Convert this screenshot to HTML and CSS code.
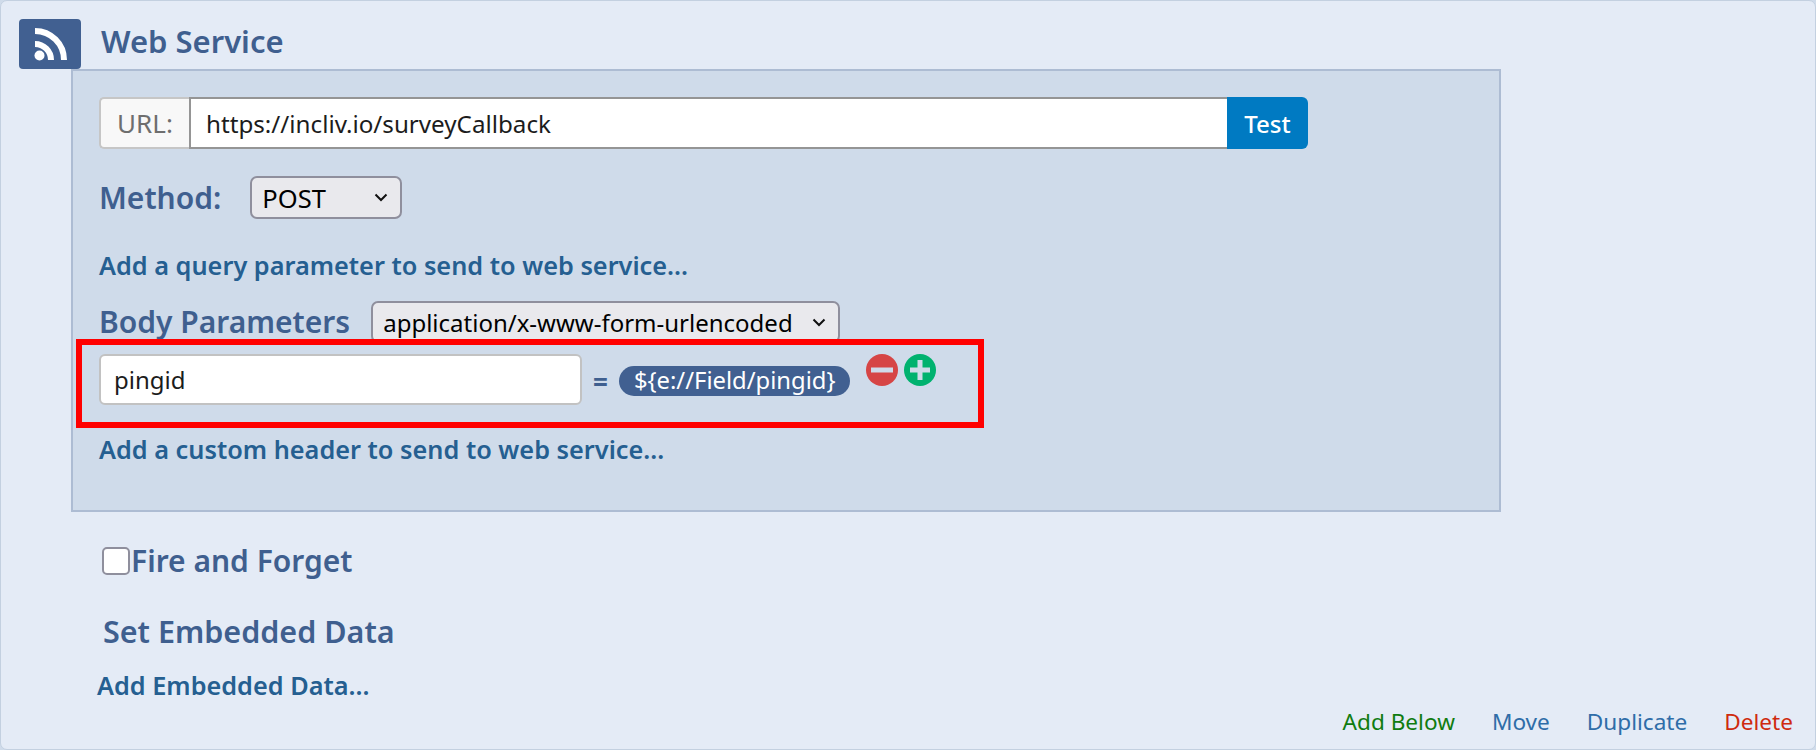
FILE: index.html
```html
<!DOCTYPE html>
<html lang="en">
<head>
<meta charset="utf-8">
<title>Web Service</title>
<link rel="stylesheet" href="styles.css">
</head>
<body>
<main class="card">
  <header class="head">
    <div class="badge">
      <svg width="36" height="36" viewBox="0 0 36 36" aria-hidden="true"><circle cx="7.500" cy="29.500" r="5" fill="#fff"/><path d="M3 18A16 16 0 0 1 19 34" fill="none" stroke="#fff" stroke-width="6"/><path d="M3 5A29 29 0 0 1 32 34" fill="none" stroke="#fff" stroke-width="6"/></svg>
    </div>
    <h1 class="title">Web Service</h1>
  </header>
  <section class="panel">
    <div class="url">
      <span class="url-label">URL:</span>
      <span class="url-value">https://incliv.io/surveyCallback</span>
      <button class="test">Test</button>
    </div>
    <div class="method">
      <span class="h-label">Method:</span>
      <div class="select select-post">POST<svg class="chev" width="14" height="9" viewBox="0 0 14 9"><path d="M1.500 1.500 7 7l5.500-5.500" fill="none" stroke="#111" stroke-width="2"/></svg></div>
    </div>
    <a class="link query">Add a query parameter to send to web service...</a>
    <div class="body-params">
      <span class="h-label">Body Parameters</span>
      <div class="select select-enc">application/x-www-form-urlencoded<svg class="chev" width="14" height="9" viewBox="0 0 14 9"><path d="M1.500 1.500 7 7l5.500-5.500" fill="none" stroke="#111" stroke-width="2"/></svg></div>
    </div>
    <div class="param">
      <div class="param-name">pingid</div>
      <span class="eq">=</span>
      <span class="pill">${e://Field/pingid}</span>
      <span class="round minus"><svg width="32" height="32" viewBox="0 0 32 32"><rect x="5" y="13.500" width="22" height="5" fill="#cfdbea"/></svg></span>
      <span class="round plus"><svg width="32" height="32" viewBox="0 0 32 32"><path d="M6 13.500h7.500V6h5v7.500H26v5h-7.500V26h-5v-7.500H6z" fill="#cfdbea"/></svg></span>
      <div class="annotation"></div>
    </div>
    <a class="link header-link">Add a custom header to send to web service...</a>
  </section>
  <label class="fire"><span class="check"></span>Fire and Forget</label>
  <h2 class="embedded">Set Embedded Data</h2>
  <a class="link add-embedded">Add Embedded Data...</a>
  <footer class="actions">
    <a class="act green">Add Below</a>
    <a class="act blue">Move</a>
    <a class="act blue">Duplicate</a>
    <a class="act red">Delete</a>
  </footer>
</main>
</body>
</html>
```
FILE: styles.css
```css
* { box-sizing: border-box; }
html, body { margin: 0; height: 750px; overflow: hidden; background: #cfdbea; }
body { font-family: "Noto Sans", "Open Sans", sans-serif; color: #1c1c1c; }
.card {
  position: relative;
  height: 750px;
  width: 1816px;
  padding: 18px 0 0 18px;
  background: #e4ebf6;
  border: 1px solid #c3d0e0;
  border-radius: 7px;
}
.head { display: flex; align-items: center; height: 50px; }
.badge {
  width: 62px; height: 50px;
  background: #416091;
  border-radius: 4px;
  display: flex; align-items: center; justify-content: center;
}
.title { margin: -6px 0 0 20px; font-size: 31px; font-weight: 600; color: #3f5f8f; line-height: 36px; }
.panel {
  width: 1430px;
  height: 443px;
  margin-left: 52px;
  padding: 26px 26px 0;
  background: #cfdbea;
  border: 2px solid #adbcd3;
}
.url { display: flex; width: 1209px; height: 52px; }
.url-label {
  width: 90px; display: flex; align-items: center; justify-content: center;
  background: #f8f8f8; border: 2px solid #c6c6c6; border-right: 0;
  border-radius: 5px 0 0 5px;
  font-size: 26px; color: #6e6e6e;
}
.url-value {
  flex: 1; display: flex; align-items: center; padding: 1px 0 0 15px;
  background: #fff; border: 2px solid #959595; border-right: 0;
  font-size: 24.200px; color: #1c1c1c;
}
.test {
  width: 81px; background: #007ac2; color: #fff; border: 0;
  border-radius: 0 6px 6px 0;
  font: 500 24px "Noto Sans", sans-serif;
  padding: 0;
}
.method { display: flex; align-items: center; margin-top: 27px; height: 43px; }
.h-label { font-size: 30px; font-weight: 600; color: #3f5f8f; line-height: 36px; }
.select {
  display: flex; align-items: center; justify-content: space-between;
  background: #e9e9ed; border: 2px solid #8f8f9d; border-radius: 7px;
  color: #000; padding: 0 12px 0 10px;
}
.select-post { width: 152px; height: 43px; margin-left: 29px; font-size: 25.500px; }
.select-enc { width: 469px; height: 42px; margin-left: 21px; font-size: 24px; }
.link { display: block; font-size: 25.300px; font-weight: 600; color: #255f91; line-height: 32px; }
.query { margin-top: 30px; }
.body-params { display: flex; align-items: center; margin-top: 20px; height: 42px; }
.param { position: relative; display: flex; align-items: flex-start; margin-top: 11px; height: 62px; }
.param-name {
  width: 483px; height: 51px; display: flex; align-items: center; padding-left: 13px;
  background: #fff; border: 2px solid #c2c2c2; border-radius: 6px;
  font-size: 24px;
}
.eq { margin: 10px 0 0 11px; font-size: 26px; font-weight: 700; color: #3f5f8f; }
.pill {
  margin: 12px 0 0 11px; height: 30px; line-height: 28px; padding: 0 14px 0 15px;
  background: #416091; color: #fff; border-radius: 15px; font-size: 23.800px;
}
.round { width: 32px; height: 32px; border-radius: 50%; display: block; flex: none; }
.round svg { display: block; }
.minus { margin: 0 0 0 16px; background: #d64545; }
.plus { margin: 0 0 0 6px; background: #00b26f; }
.annotation {
  position: absolute; left: -23px; top: -15px; width: 908px; height: 89px;
  border: 6px solid #ff0000;
}
.header-link { margin-top: 17px; }
.fire { display: flex; align-items: center; margin: 29px 0 0 83px; font-size: 30px; font-weight: 600; color: #3f5f8f; line-height: 40px; }
.check { width: 28px; height: 28px; background: #fff; border: 2px solid #8f8f9d; border-radius: 5px; margin-right: 1px; }
.embedded { margin: 32px 0 0 84px; font-size: 30.500px; font-weight: 600; color: #3f5f8f; line-height: 36px; }
.add-embedded { margin: 20px 0 0 78px; }
.actions { position: absolute; right: 22px; bottom: 12px; display: flex; gap: 37px; font-size: 22.600px; }
.green { color: #107c10; }
.blue { color: #2f6da8; }
.red { color: #cf2a0e; }
```
